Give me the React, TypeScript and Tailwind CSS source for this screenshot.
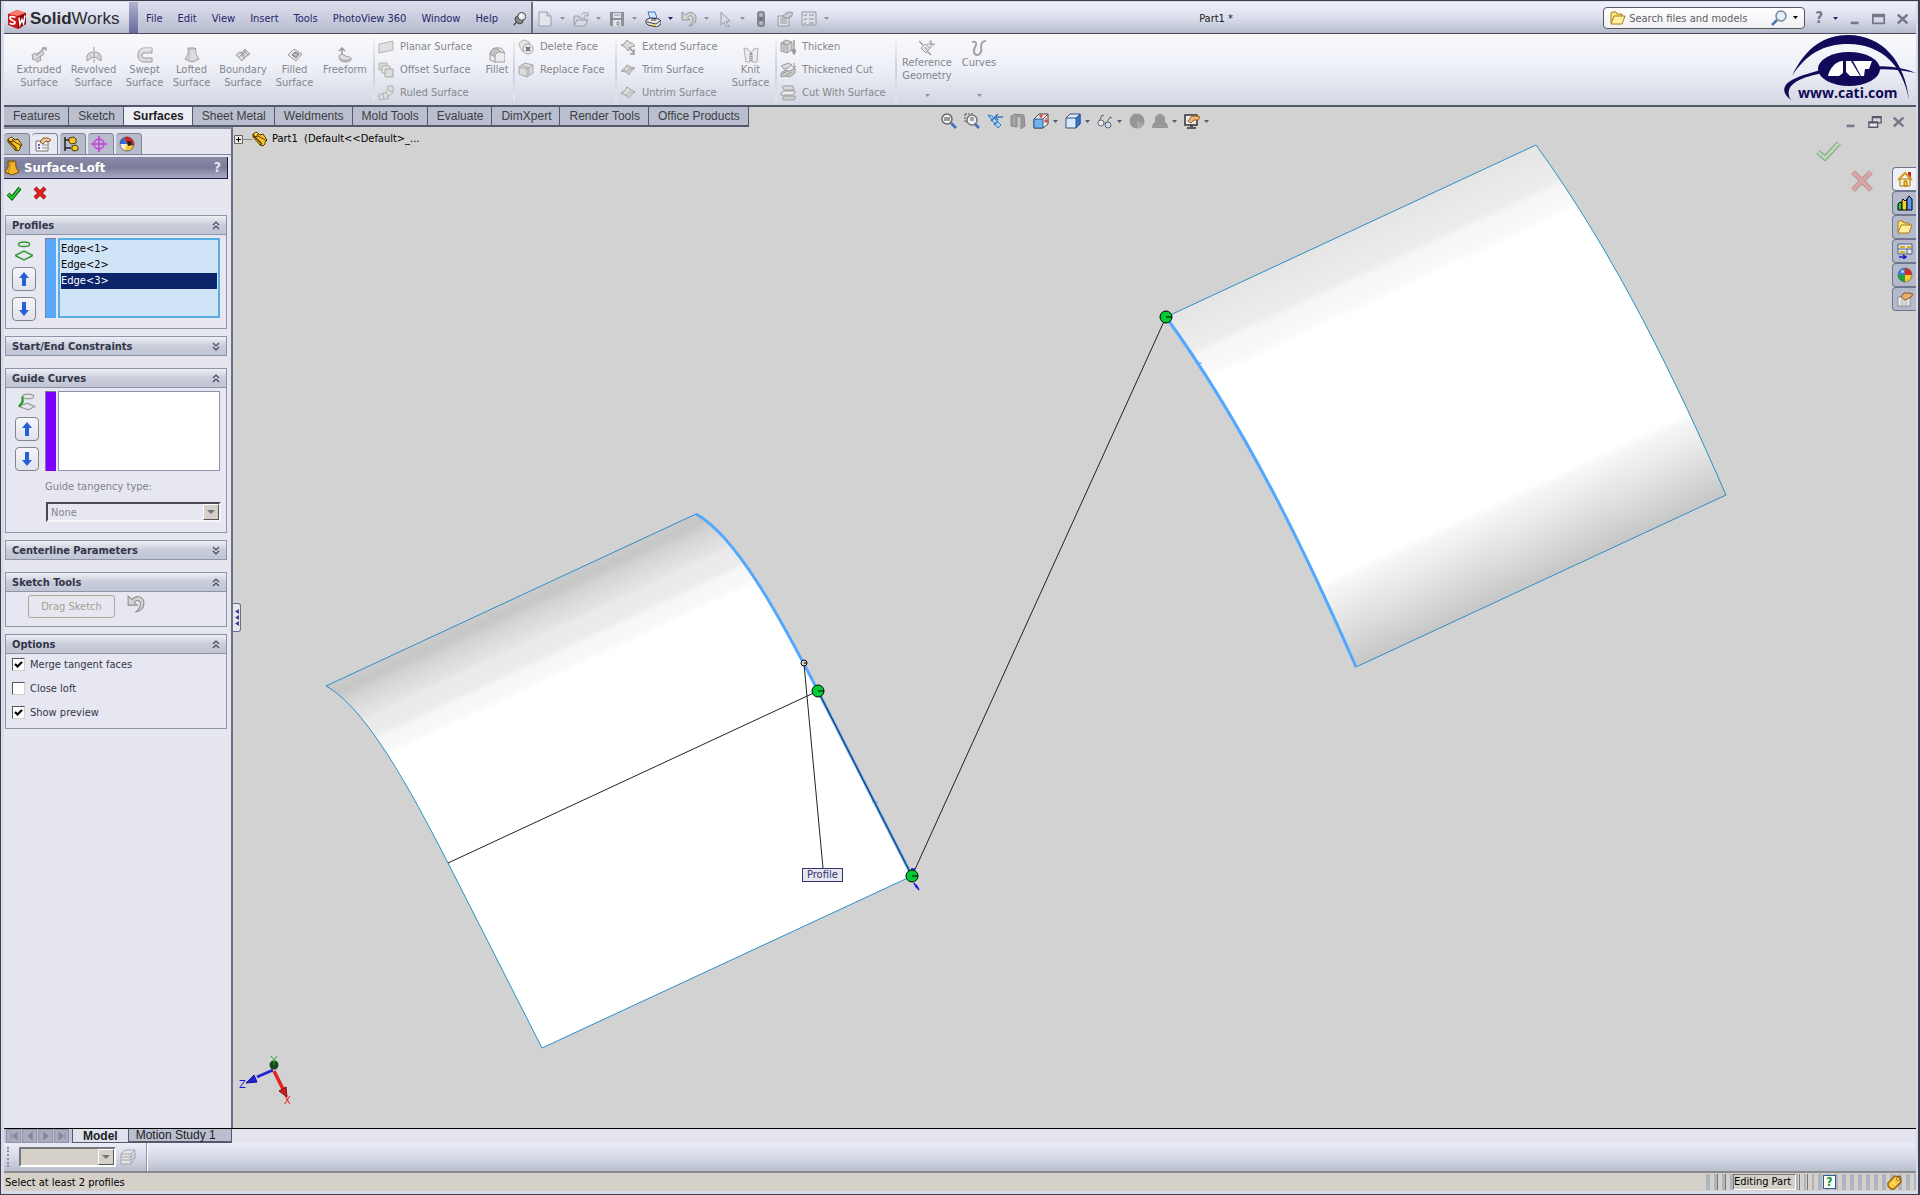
import { useState } from "react";
import type { ReactNode } from "react";
import { clsx } from "clsx";

const MENUS = ["File", "Edit", "View", "Insert", "Tools", "PhotoView 360", "Window", "Help"];

const COMMAND_TABS = [
  "Features",
  "Sketch",
  "Surfaces",
  "Sheet Metal",
  "Weldments",
  "Mold Tools",
  "Evaluate",
  "DimXpert",
  "Render Tools",
  "Office Products",
];

interface IconProps {
  children: ReactNode;
  className?: string;
}

/* 16px grid shared by every toolbar glyph */
function Icon({ children, className }: IconProps) {
  return (
    <svg viewBox="0 0 16 16" className={clsx("shrink-0", className ?? "size-4")} fill="none" aria-hidden="true">
      {children}
    </svg>
  );
}

function Caret({ className = "text-[#8f939c]" }: { className?: string }) {
  return (
    <svg viewBox="0 0 5 3" className={clsx("w-[5px] h-[3px] shrink-0", className)} aria-hidden="true">
      <path d="M0 0h5L2.5 3z" fill="currentColor" />
    </svg>
  );
}

/* ---------- toolbar glyphs ---------- */

const G = "#9b9b9b";
const L = "#dcdcdc";

function ExtrudedIcon() {
  return (
    <Icon>
      <path d="M1 8l3-2 2 1 5-4 2 4-4 3 1 3-4 2-2-3-2 1z" fill={L} stroke={G} />
      <path d="M5 9l5-4M6 12l5-4" stroke={G} />
      <path d="M10 4l4-3M11 1h4v3" stroke={G} strokeWidth="1.3" />
    </Icon>
  );
}

function RevolvedIcon() {
  return (
    <Icon>
      <path d="M1 14V9c1-3 4-4 7-4s6 1 7 4v5l-3-2c-2-2-6-2-8 0z" fill={L} stroke={G} />
      <path d="M4 7v5M12 7v5" stroke="#bdbdbd" />
      <path d="M8 0v16" stroke={G} strokeDasharray="4 2" />
    </Icon>
  );
}

function SweptIcon() {
  return (
    <Icon>
      <path d="M15 1H7a6 6 0 0 0-6 6v2a6 6 0 0 0 6 6h8v-4H7a2 2 0 0 1-2-2V8a2 2 0 0 1 2-2h8z" fill={L} stroke={G} />
      <path d="M3 4c1-1 2-2 4-2h8" stroke="#f4f4f4" />
    </Icon>
  );
}

function LoftedIcon({ fill = L, stroke = G }: { fill?: string; stroke?: string }) {
  return (
    <Icon>
      <path d="M4 1h7l1 1c-1 5 1 7 3 10l-2 1-5 2-5-2-2-1c2-3 4-5 3-9z" fill={fill} stroke={stroke} />
      <path d="M4 2h7M6 3c0 5-1 8-2 10" stroke={stroke} opacity=".5" />
    </Icon>
  );
}

function BoundaryIcon() {
  return (
    <Icon>
      <path d="M1 8l4-3 2 1 3-4 5 5-3 2-2 1-3 4z" fill={L} stroke={G} />
      <path d="M5 5l5 7M7 6l4 4M4 10l7-6M8 3l5 5" stroke={G} />
    </Icon>
  );
}

function FilledIcon() {
  return (
    <Icon>
      <path d="M1 8l6-6 8 5-6 7z" fill="#e9e9e9" stroke={G} />
      <path d="M5 8l3-3 4 2-3 4z" fill="#b5b5b5" stroke="#777" />
    </Icon>
  );
}

function FreeformIcon() {
  return (
    <Icon>
      <path d="M2 10c0-3 3-3 5-2 2 2 5 1 7 3 1 3-3 4-6 4s-6-2-6-5z" fill={L} stroke={G} />
      <path d="M3 12c3 2 8 2 11 0" stroke={G} />
      <path d="M5 8V2M2 4l3-3 3 3" stroke={G} strokeWidth="1.5" />
    </Icon>
  );
}

function PlanarIcon() {
  return (
    <Icon>
      <path d="M1 5l14-3v9L1 14z" fill="#e0e0e0" stroke="#b5b5b5" />
    </Icon>
  );
}

function OffsetIcon() {
  return (
    <Icon>
      <path d="M1 1h8v7H1z" fill={L} stroke="#b0b0b0" />
      <path d="M4 4h8v7H4z" fill="#e8e8e8" stroke="#b0b0b0" />
      <path d="M7 7h8v8H7z" fill={L} stroke="#a5a5a5" />
    </Icon>
  );
}

function RuledIcon() {
  return (
    <Icon>
      <path d="M10 1h5v5c0 3-3 4-5 5v3H6l-5 1v-5l5-2c3-1 4-3 4-7z" fill={L} stroke="#b0b0b0" />
      <path d="M10 5l5 2M8 8l3 4M5 9l1 5" stroke="#b0b0b0" />
    </Icon>
  );
}

function FilletIcon() {
  return (
    <Icon>
      <path d="M1 7c1-4 3-6 7-6h4l4 5v9H6L1 13z" fill="#ececec" stroke={G} />
      <path d="M1 7c1-4 3-6 7-6l4 4c-4 0-6 2-6 5z" fill="#c4c4c4" stroke={G} />
      <path d="M6 10v5M12 5l4 1" stroke={G} />
    </Icon>
  );
}

function DeleteFaceIcon() {
  return (
    <Icon>
      <path d="M1 6c0-3 3-5 6-5l4 2 2 4-4 6-5-1z" fill="#e4e4e4" stroke="#b8b8b8" />
      <circle cx="10" cy="10" r="5" fill="#f0f0f0" stroke={G} />
      <path d="M8 8l4 4M12 8l-4 4" stroke="#777" strokeWidth="2" />
    </Icon>
  );
}

function ReplaceFaceIcon() {
  return (
    <Icon>
      <path d="M1 5l6-4 8 2v8l-6 4-8-3z" fill={L} stroke="#a8a8a8" />
      <path d="M1 5l8 2 6-4M9 7v8M3 3l8 3v7" stroke="#a8a8a8" />
    </Icon>
  );
}

function ExtendIcon() {
  return (
    <Icon>
      <path d="M1 6l3-1 3-4 3 3 2 0 3 3-4 1-3 4-3-4z" fill={L} stroke={G} />
      <path d="M9 8l5 6M14 10v5h-4" stroke={G} strokeWidth="1.5" />
    </Icon>
  );
}

function TrimIcon() {
  return (
    <Icon>
      <path d="M1 9l4-3 2-3 3 2 5 1-4 3-2 4-3-3z" fill={L} stroke={G} />
      <path d="M3 8l4 2 4-5M8 4l5 4" stroke="#b8b8b8" strokeWidth="2" />
    </Icon>
  );
}

function UntrimIcon() {
  return (
    <Icon>
      <path d="M1 8l4-2 2-4 4 3 4 2-4 2-2 4-4-3z" fill="#e6e6e6" stroke={G} />
      <path d="M6 9l3 4 4-5-4-2z" fill="#cfcfcf" stroke="#b5b5b5" />
    </Icon>
  );
}

function KnitIcon() {
  return (
    <Icon>
      <path d="M1 1l4 1 3 4 3-4 4-1-1 14H9V8H7v7H3z" fill="#ececec" stroke="#b0b0b0" />
      <path d="M8 6v2M8 9v1M8 11v1M8 13v1" stroke={G} strokeWidth="3" />
    </Icon>
  );
}

function ThickenIcon() {
  return (
    <Icon>
      <path d="M1 4l5-3 6 2v8l-5 3-6-2z" fill="#d2d2d2" stroke={G} />
      <path d="M1 4l6 2 5-3M7 6v8M4 2v10" stroke={G} />
      <path d="M14 1v12M12 11l2 4 2-4z" stroke={G} strokeWidth="1.5" fill={G} />
    </Icon>
  );
}

function ThickenedCutIcon() {
  return (
    <Icon>
      <path d="M1 4l5-2 2-1 4 2-4 3-4 1z" fill={L} stroke={G} />
      <path d="M1 11l4-3 5 1 5-3v5l-5 4-5-1-4 1z" fill="#c8c8c8" stroke={G} />
      <path d="M2 12l5-3M6 14l6-4M14 1v5M12 4l2 2 2-2" stroke={G} />
    </Icon>
  );
}

function CutWithIcon() {
  return (
    <Icon>
      <path d="M2 2l2-1h9l1 4H4z" fill={L} stroke={G} />
      <path d="M1 8l3-2h11v2l-3 2H1z" fill="#ededed" stroke={G} />
      <path d="M3 12l2-1h10v3l-2 1H3z" fill="#cfcfcf" stroke={G} />
    </Icon>
  );
}

function RefGeometryIcon() {
  return (
    <Icon>
      <path d="M2 8l4-4 5 4-4 5z" fill="#e8e8e8" stroke={G} />
      <path d="M0 1l4 4M8 11l4 4M6 7l2 3" stroke={G} strokeWidth="1.3" />
      <path d="M12 0v8M8 4h8M10 1l5 5" stroke={G} />
    </Icon>
  );
}

function CurvesIcon() {
  return (
    <Icon>
      <path d="M1 2c5-1 5 2 3 5-2 4-1 8 2 8 4 0 5-5 4-8 0-3 1-6 5-6" stroke="#a3a3a3" strokeWidth="2" />
    </Icon>
  );
}

function FolderIcon({ className }: { className?: string }) {
  return (
    <Icon className={className}>
      <path d="M1 13V3l1-1h4l1 2h5v2" fill="#ffe680" stroke="#a87b12" />
      <path d="M1 14l3-8h11l-3 8z" fill="#fff0a0" stroke="#a87b12" />
    </Icon>
  );
}

function PartIcon({ className }: { className?: string }) {
  return (
    <Icon className={className}>
      <path d="M1 3l4-2 3 3 3-1 4 6-2 2v2l-2 2-3-1-7-8z" fill="#f7c52b" stroke="#5a3a00" />
      <path d="M1 4l8 8v3" stroke="#5a3a00" strokeWidth="1.5" />
      <path d="M5 1l1 4 9 5M6 5L2 6" stroke="#5a3a00" />
      <path d="M3 3l3-1" stroke="#fff1a0" />
    </Icon>
  );
}

function PropertyIcon() {
  return (
    <Icon>
      <path d="M1 5h12v10H1z" fill="#f5f5fa" stroke="#777" />
      <path d="M3 9h2M3 12h2" stroke="#5b6fb5" strokeWidth="2" />
      <path d="M7 9h5M7 12h5" stroke="#888" />
      <path d="M5 6l3-4h5l3 2-2 2-3-1-3 3z" fill="#f0c496" stroke="#8a5a2a" />
    </Icon>
  );
}

function UndoIcon({ className }: { className?: string }) {
  return (
    <Icon className={className}>
      <path d="M1 1v8h8L6.500 6.500C9 3.500 12 5 12 8c0 3-2 5-4 7 5-1 7-4 7-8 0-5-6-8-10.500-3z" fill="#d3d3d3" stroke="#939393" />
    </Icon>
  );
}

function SphereIcon() {
  return (
    <Icon>
      <path d="M8 8V1a7 7 0 0 1 7 7z" fill="#dd2a1b" />
      <path d="M8 8h7a7 7 0 0 1-7 7z" fill="#f7c92c" />
      <path d="M8 8v7a7 7 0 0 1-7-7z" fill="#1fa336" />
      <path d="M8 8H1a7 7 0 0 1 7-7z" fill="#3b7de0" />
      <circle cx="5.500" cy="4.500" r="1.500" fill="#b9d9ff" />
      <circle cx="8" cy="8" r="7" stroke="#44444a" strokeOpacity=".5" />
    </Icon>
  );
}

function DisplayIcon() {
  return (
    <Icon>
      <path d="M8 8L5 1.500A7 7 0 0 1 14.500 10z" fill="#d9201a" />
      <path d="M8 8l6.500 2A7 7 0 0 1 6 14.700z" fill="#f7c92c" />
      <path d="M8 8l-2 6.700A7 7 0 0 1 1 8z" fill="#f4f0d0" />
      <path d="M8 8H1a7 7 0 0 1 4-6.500z" fill="#2f6fd8" />
      <path d="M8 5l4 0 1 4-4 1z" fill="#222" />
      <circle cx="8" cy="8" r="7" stroke="#3a3a44" strokeOpacity=".6" />
    </Icon>
  );
}

function WindowGlyph({ kind }: { kind: "min" | "max" | "close" | "restore" }) {
  return (
    <Icon className="size-[14px]">
      {kind === "min" && <path d="M3 11h9v3H3z" fill="#75798a" />}
      {kind === "max" && <path d="M1 3h13v10H1zM1 5h13" stroke="#75798a" strokeWidth="2" />}
      {kind === "close" && <path d="M2 3l11 10M13 3L2 13" stroke="#75798a" strokeWidth="3" />}
      {kind === "restore" && (
        <>
          <path d="M5 2h10v7H5zM5 3h10" fill="#d5d6dc" stroke="#55586a" strokeWidth="1.500" />
          <path d="M1 8h10v6H1zM1 9h10" fill="#e8e8ee" stroke="#55586a" strokeWidth="1.500" />
        </>
      )}
    </Icon>
  );
}

/* ---------- title bar ---------- */

function ToolWithMenu({ children, active }: { children: ReactNode; active?: boolean }) {
  return (
    <button type="button" className="flex items-center gap-[7px]">
      {children}
      <Caret className={active ? "text-[#27256b]" : "text-[#8f939c]"} />
    </button>
  );
}

function TitleBar() {
  return (
    <header className="flex items-stretch h-8 bg-linear-to-b from-[#f0f0fc] via-[#dcdfee] to-[#b6bccb] border-b border-[#4a4c5c]">
      <div className="flex items-center gap-[3px] pl-[3px] pt-0.5 w-[125px]">
        <svg viewBox="0 0 20 20" className="size-5" aria-hidden="true">
          <path d="M1 5l9-4 9 3v11l-8 5-10-4z" fill="#c81414" />
          <path d="M1 5l9-4 9 3-8 3z" fill="#ff7a70" />
          <path d="M11 7l8-3v11l-8 5z" fill="#8f0b0b" />
          <path d="M8.500 8.500C5 7 2.500 7.500 3 9.500s5 2 5 4-3 2-5.500.500" fill="none" stroke="#fff" strokeWidth="1.800" />
          <path d="M12 8.500l1 7 2-5 1.500 4L18 6.500" fill="none" stroke="#fff" strokeWidth="1.500" />
        </svg>
        <span className="font-['Liberation_Sans'] text-[17px] leading-5 text-[#2b2b30]">
          <b>Solid</b>Works
        </span>
      </div>
      <div className="w-[9px] bg-linear-to-b from-[#b0b3cc] to-[#6a6a9c]" />
      <nav className="flex items-center gap-[15px] pl-2 pr-1 pt-0.5 bg-linear-to-b from-[#dddfee] to-[#b6bccd] border-r-2 border-[#6c6f82] text-[#27256b]">
        {MENUS.map((menu) => (
          <button key={menu} type="button">
            {menu}
          </button>
        ))}
        <Icon className="size-[14px]">
          <path d="M1 15l5-6" stroke="#333" strokeWidth="1.500" />
          <ellipse cx="7" cy="9" rx="5" ry="4" fill="#8b8d96" stroke="#333" transform="rotate(40 7 9)" />
          <circle cx="10" cy="5" r="4.500" fill="#e8e9ee" stroke="#333" />
          <circle cx="9" cy="4" r="1.500" fill="#fff" />
        </Icon>
      </nav>
      <div className="flex items-center gap-2 pl-1 pt-0.5">
        <ToolWithMenu>
          <Icon>
            <path d="M2 1h8l4 4v10H2z" fill="#e4e5ee" stroke="#9a9da8" />
            <path d="M10 1v4h4" stroke="#9a9da8" />
          </Icon>
        </ToolWithMenu>
        <ToolWithMenu>
          <Icon>
            <path d="M1 14V5h5l1 2h5v2" fill="#d4d6de" stroke="#9a9da8" />
            <path d="M1 15l3-6h11l-3 6zM8 4c2-3 4-3 6-1M15 1v4h-4" fill="#d9dbe4" stroke="#9a9da8" />
          </Icon>
        </ToolWithMenu>
        <ToolWithMenu>
          <Icon>
            <path d="M1 1h14v14H1z" fill="#8d9099" />
            <path d="M4 2h8v5H4zM4 9h8v6H4z" fill="#e2e3ea" />
            <path d="M5 4h6M8 11h2v3H8z" stroke="#8d9099" />
          </Icon>
        </ToolWithMenu>
        <ToolWithMenu active>
          <Icon>
            <path d="M3 1h7l2 6H5z" fill="#cfe6ff" stroke="#4278b8" />
            <path d="M1 9l4-2 9 1 2 2v3l-4 3-9-2-2-2z" fill="#e6e6e6" stroke="#3b3b3b" />
            <path d="M2 11l9 2 4-3M6 9h5" stroke="#444" />
            <path d="M8 14h3" stroke="#e0c93c" strokeWidth="2" />
          </Icon>
        </ToolWithMenu>
        <ToolWithMenu>
          <UndoIcon />
        </ToolWithMenu>
        <ToolWithMenu>
          <Icon>
            <path d="M4 1l9 9-4 .500 3 5-2.500.500L7 11l-3 3z" fill="#dadce5" stroke="#989ba6" />
          </Icon>
        </ToolWithMenu>
        <Icon>
          <rect x="4" y="0" width="8" height="16" rx="3" fill="#84868f" />
          <circle cx="8" cy="4" r="2" fill="#b8bac2" />
          <circle cx="8" cy="8" r="2" fill="#6b6d75" />
          <circle cx="8" cy="12" r="2" fill="#b8bac2" />
        </Icon>
        <Icon>
          <path d="M1 5h11v10H1z" fill="#e0e1e8" stroke="#94979f" />
          <path d="M3 8h7M3 10h7M3 12h7M5 6l4-4 4-1 3 1-2 4-4 1z" fill="#c9cbd2" stroke="#94979f" />
        </Icon>
        <ToolWithMenu>
          <Icon>
            <path d="M1 1h14v13H1z" fill="#e0e1e8" stroke="#94979f" />
            <path d="M3 4l1 1 2-2M3 8l1 1 2-2M3 12h2M8 4h5M8 8h5M8 12h5" stroke="#8b8e98" />
          </Icon>
        </ToolWithMenu>
      </div>
      <h1 className="flex-1 self-center pt-0.5 text-center text-[#222]">Part1 *</h1>
      <form className="flex items-center self-center gap-[3px] w-[202px] h-[22px] px-1.5 rounded-sm border border-[#55565e] bg-linear-to-b from-white to-[#f0f0f4]">
        <FolderIcon />
        <input
          type="text"
          aria-label="Search files and models"
          placeholder="Search files and models"
          className="flex-1 min-w-0 pt-0.5 bg-transparent outline-none placeholder:text-[#5d5d63] placeholder:opacity-100"
        />
        <Icon>
          <circle cx="10" cy="6" r="5" fill="#dff0fc" stroke="#7c8796" strokeWidth="1.500" />
          <path d="M6 10l-5 5" stroke="#4976b5" strokeWidth="2.500" />
        </Icon>
        <span className="pl-[3px]">
          <Caret className="text-black" />
        </span>
      </form>
      <div className="flex items-center gap-2.5 pl-2.5 pr-[6px] pt-0.5">
        <button type="button" className="text-[15px] font-bold text-[#75798a]">?</button>
        <Caret className="text-[#27256b]" />
        <WindowGlyph kind="min" />
        <WindowGlyph kind="max" />
        <WindowGlyph kind="close" />
      </div>
    </header>
  );
}

/* ---------- ribbon ---------- */

interface BigCommandProps {
  icon: ReactNode;
  lines: string[];
  className: string;
}

function BigCommand({ icon, lines, className }: BigCommandProps) {
  return (
    <button type="button" className={clsx("flex flex-col items-center whitespace-nowrap", className)}>
      {icon}
      {lines.map((line) => (
        <span key={line}>{line}</span>
      ))}
    </button>
  );
}

function SmallCommand({ icon, label }: { icon: ReactNode; label: string }) {
  return (
    <button type="button" className="flex items-center gap-1.5 h-[23px] whitespace-nowrap">
      {icon}
      {label}
    </button>
  );
}

function Divider() {
  return <div className="w-0.5 self-stretch my-1 bg-linear-to-b from-[#f2f2f6] via-[#cdd0da] to-[#e6e8ef]" />;
}

function CompanyLogo() {
  return (
    <svg viewBox="0 0 132 68" className="w-[132px] h-[68px]" role="img" aria-label="www.cati.com">
      <path d="M8 42C22 12 42 1 64 1c34 0 57 26 61 65-6-34-27-56-61-56C40 10 22 20 8 42z" fill="#100a59" />
      <path d="M7 66C-4 58 0 50 8 46c9-5 22-8 36-12l1 4C26 41 8 46 5 56c-1 4 0 7 2 10z" fill="#100a59" />
      <path d="M86 33c16-2 32 0 46 6-15-3-30-5-46-3z" fill="#100a59" />
      <ellipse cx="65" cy="35" rx="31" ry="17" fill="#100a59" />
      <path d="M44 42c2-8 7-14 14-15h1v12l-4 3zM62 27h5l9 15H66l-4-4zM69 27h19l-3 8h-4l-1 7h-3z" fill="#fff" />
      <text x="14" y="64" className="font-['Open_Sans'] text-[14px] font-bold" fill="#100a59">
        www.cati.com
      </text>
    </svg>
  );
}

function Ribbon() {
  return (
    <section className="flex h-[73px] pl-[13px] text-[#85868c] bg-linear-to-b from-[#fafafc] via-[#edeff7] to-[#d3d7e2] border-b-2 border-[#55586b]">
      <div className="flex gap-2.5 pt-[13px] pr-1.5">
        <BigCommand className="w-11" icon={<ExtrudedIcon />} lines={["Extruded", "Surface"]} />
        <BigCommand className="w-[45px]" icon={<RevolvedIcon />} lines={["Revolved", "Surface"]} />
        <BigCommand className="w-[37px]" icon={<SweptIcon />} lines={["Swept", "Surface"]} />
        <BigCommand className="w-[37px]" icon={<LoftedIcon />} lines={["Lofted", "Surface"]} />
        <BigCommand className="w-[46px]" icon={<BoundaryIcon />} lines={["Boundary", "Surface"]} />
        <BigCommand className="w-[37px]" icon={<FilledIcon />} lines={["Filled", "Surface"]} />
        <BigCommand className="w-11" icon={<FreeformIcon />} lines={["Freeform"]} />
      </div>
      <Divider />
      <div className="flex w-[138px] pl-[3px] pr-1 pt-px justify-between">
        <div>
          <SmallCommand icon={<PlanarIcon />} label="Planar Surface" />
          <SmallCommand icon={<OffsetIcon />} label="Offset Surface" />
          <SmallCommand icon={<RuledIcon />} label="Ruled Surface" />
        </div>
        <div className="pt-3">
          <BigCommand className="w-6" icon={<FilletIcon />} lines={["Fillet"]} />
        </div>
      </div>
      <Divider />
      <div className="w-[100px] pl-[3px] pt-px">
        <SmallCommand icon={<DeleteFaceIcon />} label="Delete Face" />
        <SmallCommand icon={<ReplaceFaceIcon />} label="Replace Face" />
      </div>
      <Divider />
      <div className="flex w-[158px] pl-[3px] pr-1.5 pt-px justify-between">
        <div>
          <SmallCommand icon={<ExtendIcon />} label="Extend Surface" />
          <SmallCommand icon={<TrimIcon />} label="Trim Surface" />
          <SmallCommand icon={<UntrimIcon />} label="Untrim Surface" />
        </div>
        <div className="pt-3">
          <BigCommand className="w-[37px]" icon={<KnitIcon />} lines={["Knit", "Surface"]} />
        </div>
      </div>
      <Divider />
      <div className="w-[118px] pl-[3px] pt-px">
        <SmallCommand icon={<ThickenIcon />} label="Thicken" />
        <SmallCommand icon={<ThickenedCutIcon />} label="Thickened Cut" />
        <SmallCommand icon={<CutWithIcon />} label="Cut With Surface" />
      </div>
      <Divider />
      <div className="flex gap-2.5 pl-[5px] pt-1.5">
        <div className="flex flex-col items-center justify-between pb-2">
          <BigCommand className="w-[50px]" icon={<RefGeometryIcon />} lines={["Reference", "Geometry"]} />
          <Caret />
        </div>
        <div className="flex flex-col items-center justify-between pb-2">
          <BigCommand className="w-[34px]" icon={<CurvesIcon />} lines={["Curves"]} />
          <Caret />
        </div>
      </div>
      <a href="#cati" className="ml-auto self-start">
        <CompanyLogo />
      </a>
    </section>
  );
}

const HUD_CARET = "text-[#555b75]";

function HeadsUpToolbar() {
  return (
    <div className="absolute left-[229px] right-0 top-1.5 flex justify-center items-center gap-[7px]">
      <Icon>
        <circle cx="6" cy="6" r="5" fill="#f2f2f2" stroke="#666" strokeWidth="1.500" />
        <path d="M3 5h6M3 7h6" stroke="#444" />
        <path d="M10 10l5 5" stroke="#3c6fb4" strokeWidth="2.500" />
      </Icon>
      <Icon>
        <path d="M1 1h8v8H1z" stroke="#555" strokeDasharray="2 1" />
        <circle cx="8" cy="7" r="5" fill="#f2f2f2" stroke="#777" strokeWidth="1.500" />
        <path d="M7 4v4M9 4v4" stroke="#555" />
        <path d="M11 11l4 4" stroke="#3c6fb4" strokeWidth="2.500" />
      </Icon>
      <Icon>
        <path d="M1 2l4 1 9 9-3 3z" fill="#aed6f7" stroke="#3277bb" />
        <path d="M4 8l4-4M7 12l4-4" stroke="#3277bb" strokeWidth="1.500" />
        <path d="M16 4H9M11 1L8 4l3 3" stroke="#3c78bd" strokeWidth="1.500" />
      </Icon>
      <Icon>
        <path d="M1 3l4-2 9 1 1 11-4 3V4L7 3v11l-6-1z" fill="#9a9a9a" stroke="#8a8a8a" />
        <path d="M4 2v11M9 4v11" stroke="#b5b5b5" />
      </Icon>
      <div className="flex items-center gap-1">
        <Icon>
          <path d="M1 6l5-5h9v10l-5 4H1z" fill="#eee" stroke="#444" />
          <path d="M1 6h9v9H1z" fill="#72b3ec" stroke="#2c5e96" />
          <path d="M10 6l5-5M8 1v4M6 3h4M13 5v5M11 8h4" stroke="#c22" />
        </Icon>
        <Caret className={HUD_CARET} />
      </div>
      <div className="flex items-center gap-1">
        <Icon>
          <path d="M1 5l4-4h10v10l-4 4H1z" fill="#d6eafc" stroke="#3a4f80" />
          <path d="M11 5l4-4v10l-4 4z" fill="#3478c8" stroke="#2c4f90" />
          <path d="M1 5h10" stroke="#3a4f80" />
        </Icon>
        <Caret className={HUD_CARET} />
      </div>
      <div className="flex items-center gap-1">
        <Icon>
          <path d="M2 9L5 2l2 1M10 9l3-5 2 1M7 10h2" stroke="#666" />
          <circle cx="4" cy="10" r="3" fill="#e4eefa" stroke="#666" />
          <circle cx="11" cy="12" r="3" fill="#c4dcf5" stroke="#666" />
        </Icon>
        <Caret className={HUD_CARET} />
      </div>
      <Icon>
        <circle cx="8" cy="8" r="7.500" fill="#959595" />
        <path d="M8 8l7 3A8 8 0 0 1 8 15z" fill="#a8a8a8" />
      </Icon>
      <div className="flex items-center gap-1">
        <Icon>
          <path d="M0 15c0-3 1-5 3-6V6a5 5 0 0 1 10 0v3c2 1 3 3 3 6z" fill="#969696" />
          <path d="M3 13h10" stroke="#adadad" strokeDasharray="2 2" />
        </Icon>
        <Caret className={HUD_CARET} />
      </div>
      <div className="flex items-center gap-1">
        <Icon>
          <path d="M1 2h12v10H1z" fill="#e9eaf0" stroke="#333" strokeWidth="1.500" />
          <path d="M3 15h9M6 13h3" stroke="#333" strokeWidth="1.500" />
          <path d="M4 8l4-5h5l3 1-2 3-4 0-3 3z" fill="#efb678" stroke="#96591c" />
        </Icon>
        <Caret className={HUD_CARET} />
      </div>
    </div>
  );
}

function CommandTabs({ active, onSelect }: { active: string; onSelect: (tab: string) => void }) {
  return (
    <div className="relative z-10 flex h-5 bg-[#d2d2d2]">
      <div role="tablist" className="flex bg-[#55586b] font-['Liberation_Sans'] text-[12px] leading-4">
        {COMMAND_TABS.map((tab) => (
          <button
            key={tab}
            type="button"
            role="tab"
            aria-selected={tab === active}
            onClick={() => onSelect(tab)}
            className={clsx(
              "pl-[9px] pr-2 border-r border-b-2 border-[#55586b] whitespace-nowrap",
              tab === active ? "bg-[#eceef5] font-bold text-[#1d1d24]" : "bg-[#b9bfce] text-[#3c3d44]"
            )}
          >
            {tab}
          </button>
        ))}
      </div>
      <HeadsUpToolbar />
      <div className="relative ml-auto flex items-center gap-2.5 pt-[9px] pr-[10px]">
        <WindowGlyph kind="min" />
        <WindowGlyph kind="restore" />
        <WindowGlyph kind="close" />
      </div>
    </div>
  );
}

/* ---------- property manager ---------- */

function Chevrons({ open }: { open: boolean }) {
  return (
    <svg viewBox="0 0 8 9" className={clsx("w-2 h-[9px]", !open && "rotate-180")} aria-hidden="true">
      <path d="M1 4l3-3 3 3M1 8l3-3 3 3" fill="none" stroke="#44475a" strokeWidth="1.200" />
    </svg>
  );
}

interface GroupProps {
  title: string;
  children?: ReactNode;
  className?: string;
}

function Group({ title, children, className }: GroupProps) {
  const [open, setOpen] = useState(children !== undefined);
  return (
    <section className="border border-[#8f93a6] bg-[#e7e7f1]">
      <button
        type="button"
        onClick={() => setOpen(!open)}
        className={clsx(
          "flex w-full items-center justify-between pl-[6px] pr-1.5 bg-linear-to-b from-[#eff0f6] via-[#c9cdda] to-[#c0c5d5] font-bold text-[#33364a]",
          open ? "h-[19px] border-b border-[#8f93a6]" : "h-[18px]"
        )}
      >
        {title}
        <Chevrons open={open} />
      </button>
      {open && children && <div className={className}>{children}</div>}
    </section>
  );
}

function ArrowButton({ direction }: { direction: "up" | "down" }) {
  return (
    <button
      type="button"
      aria-label={direction === "up" ? "Move up" : "Move down"}
      className="flex size-6 items-center justify-center rounded-[4px] border border-[#82848e] bg-linear-to-b from-[#f6f6fa] to-[#e0e1ea]"
    >
      <Icon className={clsx("size-4", direction === "down" && "rotate-180")}>
        <path d="M8 1l5 6h-3v8H6V7H3z" fill="#2560d8" />
      </Icon>
    </button>
  );
}

function CheckOption({ label, checked }: { label: string; checked: boolean }) {
  const [on, setOn] = useState(checked);
  return (
    <label className="flex items-center gap-[5px] h-6 pb-[3px]">
      <span className="grid size-[13px]">
        <input
          type="checkbox"
          checked={on}
          onChange={() => setOn(!on)}
          className="col-start-1 row-start-1 appearance-none size-[13px] bg-white border border-t-[#55555a] border-l-[#55555a] border-r-[#d6d2ca] border-b-[#d6d2ca]"
        />
        {on && (
          <svg viewBox="0 0 13 13" className="col-start-1 row-start-1 pointer-events-none" aria-hidden="true">
            <path d="M3 6l2.500 2.500L10 4" fill="none" stroke="#000" strokeWidth="2.200" />
          </svg>
        )}
      </span>
      {label}
    </label>
  );
}

const PANEL_TABS: { name: string; icon: ReactNode }[] = [
  { name: "Feature tree", icon: <PartIcon /> },
  { name: "Property manager", icon: <PropertyIcon /> },
  {
    name: "Configurations",
    icon: (
      <Icon>
        <path d="M2 1v14M2 4h4M2 12h6" stroke="#222" strokeWidth="1.500" />
        <path d="M6 2l5-1 2 2v4l-5 1-2-2zM9 10l4-1 2 2v3l-4 1-2-1z" fill="#f5c92e" stroke="#4a3500" />
      </Icon>
    ),
  },
  {
    name: "DimXpert",
    icon: (
      <Icon>
        <circle cx="8" cy="8" r="5" stroke="#c93fd6" strokeWidth="1.500" />
        <path d="M8 0v16M0 8h16" stroke="#c93fd6" strokeWidth="1.500" />
      </Icon>
    ),
  },
  { name: "Display", icon: <DisplayIcon /> },
];

function PropertyManager() {
  const [selected, setSelected] = useState("Edge<3>");
  return (
    <aside className="w-[229px] shrink-0 border-t-2 border-t-[#8f93a6] border-r-2 border-r-[#6b6f85] bg-[#e6e6ef] text-[#33364a]">
      <div className="flex items-end gap-0.5 h-[26px] border-b border-[#8186a0]">
        {PANEL_TABS.map((tab, index) => (
          <button
            key={tab.name}
            type="button"
            aria-label={tab.name}
            className={clsx(
              "flex w-[26px] h-[21px] items-center pl-[3px] rounded-t-[4px] border border-l-0 border-b-0 border-[#7e839a]",
              index === 1 ? "bg-[#e9e9f2]" : "bg-[#b7bccd]"
            )}
          >
            {tab.icon}
          </button>
        ))}
      </div>
      <h2 className="flex items-center gap-1 h-[22px] mt-0.5 mr-[3px] pr-1.5 bg-linear-to-b from-[#8a8ba6] via-[#7c7d9b] to-[#a9aac2] border-b border-r border-[#1b1b4a] text-[13px] font-bold text-white">
        <LoftedIcon fill="#f3b52a" stroke="#6e4a08" />
        <span className="flex-1">Surface-Loft</span>
        <span className="text-[14px] text-[#e4e4ec]">?</span>
      </h2>
      <div className="flex gap-2.5 pl-[2px] pt-1.5">
        <button type="button" aria-label="OK">
          <Icon>
            <path d="M2 9l4 4 8-10" stroke="#145c14" strokeWidth="4" />
            <path d="M2 9l4 4 8-10" stroke="#27cf2b" strokeWidth="2" />
          </Icon>
        </button>
        <button type="button" aria-label="Cancel">
          <Icon>
            <path d="M3 3l10 10M13 3L3 13" stroke="#8a1010" strokeWidth="4" />
            <path d="M3 3l10 10M13 3L3 13" stroke="#ea2222" strokeWidth="2.500" />
          </Icon>
        </button>
      </div>

      <div className="flex flex-col gap-[7px] pt-3.5 pl-px pr-1">
        <Group title="Profiles" className="flex h-[93px] pt-[3px] pl-1.5">
          <div className="flex flex-col items-center gap-1.5 w-6 pt-[3px]">
            <Icon className="w-[18px] h-5">
              <ellipse cx="8" cy="2" rx="5" ry="2" stroke="#2d9a2d" strokeWidth="1.300" />
              <path d="M0 12l8-4 8 4-8 4z" stroke="#2d9a2d" strokeWidth="1.300" />
            </Icon>
            <ArrowButton direction="up" />
            <ArrowButton direction="down" />
          </div>
          <div className="w-[11px] h-20 ml-[9px] bg-[#58a8fb] border-t border-l border-[#7d8092]" />
          <ul role="listbox" aria-label="Profiles" className="w-[162px] h-20 ml-0.5 p-px border-2 border-[#5aade3] bg-[#d0e4f7] leading-4 text-black">
            {["Edge<1>", "Edge<2>", "Edge<3>"].map((edge) => (
              <li
                key={edge}
                role="option"
                aria-selected={edge === selected}
                onClick={() => setSelected(edge)}
                className={clsx(edge === selected && "bg-[#0b246a] text-white")}
              >
                {edge}
              </li>
            ))}
          </ul>
        </Group>
        <Group title="Start/End Constraints" />
      </div>

      <div className="flex flex-col gap-[7px] pt-3 pl-px pr-1">
        <Group title="Guide Curves" className="h-[144px] pt-[3px] pl-1.5">
          <div className="flex">
            <div className="flex flex-col items-center gap-1.5 w-[30px] pt-0.5">
              <Icon className="size-[18px]">
                <ellipse cx="9" cy="3" rx="5" ry="2" stroke="#9a9a9a" />
                <path d="M1 12l7-3 7 3-6 3z" stroke="#9a9a9a" />
                <path d="M4 3v5l-3 4" stroke="#1f9e1f" strokeWidth="2" />
              </Icon>
              <ArrowButton direction="up" />
              <ArrowButton direction="down" />
            </div>
            <div className="w-[11px] h-20 ml-[3px] bg-[#7b00ff] border-t border-l border-[#7d8092]" />
            <div role="listbox" aria-label="Guide curves" className="w-[162px] h-20 ml-0.5 border border-[#8c93ab] bg-white" />
          </div>
          <label htmlFor="tangency" className="block mt-2 ml-[33px] leading-4 text-[#83848c]">
            Guide tangency type:
          </label>
          <div className="relative mt-[7px] ml-[34px] w-[175px]">
            <select
              id="tangency"
              disabled
              className="appearance-none block w-full h-5 px-[3px] border-2 border-t-[#4a4a4e] border-l-[#4a4a4e] border-r-[#f5f5f8] border-b-[#f5f5f8] bg-transparent text-[#83848c] opacity-100"
            >
              <option>None</option>
            </select>
            <ComboArrow />
          </div>
        </Group>
        <Group title="Centerline Parameters" />
      </div>

      <div className="flex flex-col gap-[7px] pt-3 pl-px pr-1">
        <Group title="Sketch Tools" className="flex items-start h-[34px] gap-3 pt-[3px] pl-[22px]">
          <button type="button" disabled className="w-[87px] h-[23px] rounded-[3px] border border-[#a9ab97] text-[#a0a193]">
            Drag Sketch
          </button>
          <UndoIcon className="size-[18px]" />
        </Group>
        <Group title="Options" className="h-[74px] pl-1.5">
          <CheckOption label="Merge tangent faces" checked />
          <CheckOption label="Close loft" checked={false} />
          <CheckOption label="Show preview" checked />
        </Group>
      </div>
    </aside>
  );
}

function ComboArrow() {
  return (
    <span className="pointer-events-none absolute right-0.5 top-0.5 bottom-0.5 flex w-4 items-center justify-center border border-t-white border-l-white border-r-[#55555a] border-b-[#55555a] bg-[#d5d0c8]">
      <svg viewBox="0 0 8 4" className="w-2 h-1" aria-hidden="true">
        <path d="M0 0h8L4 4z" fill="#77777a" />
      </svg>
    </span>
  );
}

/* ---------- graphics area ---------- */

function Vertex({ x, y }: { x: number; y: number }) {
  return (
    <g>
      <circle cx={x} cy={y} r="6" fill="#00cc33" stroke="#000" />
      <path d={`M${x} ${y}h6`} stroke="#000" />
    </g>
  );
}

const LEFT_FACE = "M326 686C366 708 410 789 448 863L542 1048L912 876L818 691C780 617 736 536 696 514Z";
const LEFT_PROFILE = "M696 514C736 536 780 617 818 691L912 876";
const RIGHT_FACE = "M1166 317C1246 427 1308 557 1356 667L1726 495C1678 385 1616 255 1536 145Z";
const RIGHT_PROFILE = "M1166 317C1246 427 1308 557 1356 667";

function Scene() {
  return (
    <svg className="absolute inset-0 w-full h-full" aria-label="Loft preview">
      <defs>
        {/* both gradients run across the extrusion direction */}
        <linearGradient id="leftShade" gradientUnits="userSpaceOnUse" x1="326" y1="686" x2="364" y2="767">
          <stop offset="0" stopColor="#cbcbcb" />
          <stop offset=".12" stopColor="#c6c6c6" />
          <stop offset=".24" stopColor="#d4d4d4" />
          <stop offset=".4" stopColor="#dfdfdf" />
          <stop offset=".48" stopColor="#e4e4e4" />
          <stop offset=".52" stopColor="#eaeaea" />
          <stop offset=".72" stopColor="#ececec" />
          <stop offset=".78" stopColor="#f6f6f8" />
          <stop offset=".95" stopColor="#f9f9fa" />
          <stop offset="1" stopColor="#fff" />
        </linearGradient>
        <linearGradient id="rightShade" gradientUnits="userSpaceOnUse" x1="1166" y1="317" x2="1334" y2="678">
          <stop offset="0" stopColor="#e5e5e5" />
          <stop offset=".07" stopColor="#ebebeb" />
          <stop offset=".1" stopColor="#ececec" />
          <stop offset=".12" stopColor="#f6f6f8" />
          <stop offset=".17" stopColor="#f9f9fa" />
          <stop offset=".19" stopColor="#fff" />
          <stop offset=".77" stopColor="#fff" />
          <stop offset=".79" stopColor="#f6f6f8" />
          <stop offset=".84" stopColor="#ececec" />
          <stop offset=".91" stopColor="#dcdcdc" />
          <stop offset="1" stopColor="#c6c6c6" />
        </linearGradient>
      </defs>
      <g transform="translate(-233 -127)" fill="none">
        <path d={LEFT_FACE} fill="url(#leftShade)" stroke="#2a8fc9" />
        <path d={RIGHT_FACE} fill="url(#rightShade)" stroke="#2a8fc9" />
        <path d={LEFT_PROFILE} stroke="#52a8ff" strokeWidth="3" />
        <path d={RIGHT_PROFILE} stroke="#52a8ff" strokeWidth="3" />
        <path d="M872 802h6M1196 363h6" stroke="#52a8ff" />
        <path d="M448 863L818 691L912 876L1166 317M804 664L823 868" stroke="#222" />
        <path d="M911 869h4M914 883l3 5-1-3 3 5" stroke="#1414e0" strokeWidth="1.500" />
        <circle cx="804" cy="663" r="3" fill="#d2d2d2" stroke="#000" />
        <path d="M804 663h3" stroke="#000" />
        <Vertex x={818} y={691} />
        <Vertex x={912} y={876} />
        <Vertex x={1166} y={317} />

        {/* orientation triad */}
        <path d="M273 1070l-16 7" stroke="#2222d8" strokeWidth="3" />
        <path d="M246 1083l8-8 3 7z" fill="#2222d8" stroke="#14148c" />
        <path d="M274 1071l9 18" stroke="#e02424" strokeWidth="3.500" />
        <path d="M287 1097l-8-6 7-4z" fill="#c81f1f" stroke="#7a1010" />
        <circle cx="274" cy="1065" r="4.500" fill="#134a17" />
        <path d="M271 1056l3 4 3-4M274 1060v5" stroke="#1fae2b" />
        <text x="239" y="1088" fill="#1a1ae0">Z</text>
        <text x="284" y="1104" fill="#e81c1c">X</text>
      </g>
    </svg>
  );
}

const TASK_TABS: { name: string; icon: ReactNode }[] = [
  {
    name: "Resources",
    icon: (
      <Icon>
        <path d="M3 8h10v7H3z" fill="#fff6c4" stroke="#a8700e" />
        <path d="M11 1h3v6h-3z" fill="#c22f1d" />
        <path d="M1 9l7-7 7 7" stroke="#d8991f" strokeWidth="2" />
        <path d="M7 10h3v5H7z" fill="#f5c92e" stroke="#a8700e" />
      </Icon>
    ),
  },
  {
    name: "Design Library",
    icon: (
      <Icon>
        <path d="M1 9l2-2 2 1v7H1z" fill="#2bc23a" stroke="#000" />
        <path d="M5 6l1-2 2 2 2-2v11H5z" fill="#f5d32e" stroke="#000" />
        <path d="M10 4l2-3 2 2 1 1v11h-5z" fill="#5a9df0" stroke="#000" />
      </Icon>
    ),
  },
  { name: "File Explorer", icon: <FolderIcon /> },
  {
    name: "View Palette",
    icon: (
      <Icon>
        <path d="M1 1h14v10H1z" fill="#dce3f2" stroke="#56617f" />
        <path d="M3 4h5M3 9h5M10 4h4" stroke="#d8b414" strokeWidth="2" />
        <path d="M10 6v5M1 6h14" stroke="#56617f" />
        <path d="M2 14h6M6 12l3 2-3 2" stroke="#1a1acc" strokeWidth="1.500" />
      </Icon>
    ),
  },
  { name: "Appearances", icon: <SphereIcon /> },
  {
    name: "Custom Properties",
    icon: (
      <Icon>
        <path d="M1 6h12v9H1z" fill="#f4f4f4" stroke="#8a8a8a" />
        <path d="M3 9h8M3 11h8M3 13h8" stroke="#aaa" />
        <path d="M4 6l3-4h5l4 1-2 3-4 2-2 1z" fill="#e8b070" stroke="#8c5218" />
      </Icon>
    ),
  },
];

function GraphicsArea() {
  return (
    <main className="relative flex-1 overflow-hidden bg-[#d2d2d2]">
      <Scene />
      <div className="relative flex items-center pl-[1px] pt-1 text-black">
        <svg viewBox="0 0 9 9" className="size-[9px]" aria-hidden="true">
          <path d="M.5.5h8v8h-8z" fill="#e8e8e8" stroke="#666" />
          <path d="M2 4.500h5M4.500 2v5" stroke="#000" />
        </svg>
        <span className="w-[9px] h-px bg-[#888]" />
        <PartIcon />
        <span className="pl-1 leading-4 whitespace-pre">{"Part1  (Default<<Default>_..."}</span>
      </div>
      <span className="absolute left-[569px] top-[741px] px-1 border border-[#33336e] bg-[#e6e6f0] text-[#33336e] leading-3">
        Profile
      </span>
      <svg viewBox="0 0 64 52" className="absolute right-[42px] top-[13px] w-16 h-[52px]" fill="none" aria-hidden="true">
        <path d="M8 12l7 6L29 3" stroke="#8d9d8d" strokeWidth="5" />
        <path d="M8 12l7 6L29 3" stroke="#b7dbb4" strokeWidth="3" />
        <path d="M43 32l18 18M61 32L43 50" stroke="#a98f8f" strokeWidth="5" />
        <path d="M43 32l18 18M61 32L43 50" stroke="#dba5a5" strokeWidth="3.500" />
      </svg>
      <div className="absolute right-0 top-10 flex flex-col">
        {TASK_TABS.map((tab, index) => (
          <button
            key={tab.name}
            type="button"
            aria-label={tab.name}
            className={clsx(
              "flex w-6 h-6 items-center justify-center rounded-l-[4px] border border-r-0 border-[#6f7690]",
              index === 0 ? "bg-[#eef0f6]" : "bg-[#b4bacb]"
            )}
          >
            {tab.icon}
          </button>
        ))}
      </div>
      <div className="absolute left-0 top-[476px] flex flex-col justify-around w-2 h-[29px] pl-[2px] py-1 rounded-r-[3px] border border-l-0 border-[#6b6f85] bg-[#e6e6ef]">
        {[0, 1, 2].map((n) => (
          <svg key={n} viewBox="0 0 4 5" className="w-1 h-[5px]" aria-hidden="true">
            <path d="M4 0v5L0 2.500z" fill="#3e4290" />
          </svg>
        ))}
      </div>
    </main>
  );
}

/* ---------- bottom bars ---------- */

const STEP_PATHS = ["M4 3v10M12 3v10L6 8z", "M11 3v10L5 8z", "M5 3v10l6-5z", "M4 3v10l6-5zM12 3v10"];

function StudyTabs() {
  return (
    <div className="flex h-[15px] bg-[#e5e5ef] border-t border-black font-['Liberation_Sans'] text-[12px] leading-3">
      <div className="flex gap-px pl-0.5 w-[68px] bg-[#c4c7d6]">
        {STEP_PATHS.map((d) => (
          <button key={d} type="button" aria-label="Scroll tabs" className="flex w-[15px] items-center justify-center border border-[#9194a8] bg-[#a9acbf]">
            <Icon className="size-3">
              <path d={d} fill="#83869c" stroke="#83869c" />
            </Icon>
          </button>
        ))}
      </div>
      <button type="button" className="px-2.5 border-b border-x border-[#55586b] bg-[#dfe2ec] font-bold text-[#1d1d24]">
        Model
      </button>
      <button type="button" className="w-[103px] pl-[7px] text-left border-b-2 border-r border-[#55586b] bg-[#b9bfce] text-[#1d1d24]">
        Motion Study 1
      </button>
    </div>
  );
}

function BottomToolbar() {
  return (
    <div className="flex h-7 items-center bg-linear-to-b from-[#ececf8] via-[#d6d9e8] to-[#b9bfcd]">
      <div className="h-5 ml-[3px] border-l-2 border-dotted border-[#8b8fa3]" />
      <div className="relative ml-[10px] w-[97px]">
        <select
          aria-label="Layer"
          disabled
          className="appearance-none block w-full h-5 border-2 border-t-[#77777a] border-l-[#77777a] border-r-white border-b-white bg-[#d5d0c8] opacity-100"
        />
        <ComboArrow />
      </div>
      <Icon className="size-4 ml-1">
        <path d="M1 5l4-4h10v8l-4 6H1z" fill="#e4e4e8" stroke="#a3a5ad" />
        <path d="M1 5h10l4-4M11 5v10M1 8h10M1 11h10M11 8l4-3M11 11l4-3" stroke="#a3a5ad" />
      </Icon>
      <div className="self-stretch ml-2.5 w-0.5 bg-[#8f93a6] border-r border-white" />
    </div>
  );
}

function StatusBar() {
  return (
    <footer className="flex h-5 items-center border-t-2 border-[#8a8a8e] bg-[#d5d0c8] text-black">
      <span className="flex-1 pl-px">Select at least 2 profiles</span>
      <div className="flex items-center h-4 bg-[repeating-linear-gradient(90deg,#adb5c5_0_4px,#d5d0c8_4px_8px)]">
        <div className="flex gap-[3px] pl-[11px]">
          <span className="w-[5px] h-4 border-l border-[#77777a] bg-[#d5d0c8]" />
          <span className="w-[5px] h-4 border-l border-[#77777a] bg-[#d5d0c8]" />
          <span className="w-[63px] h-4 border border-t-[#77777a] border-l-[#77777a] border-r-white border-b-white bg-[#d5d0c8] leading-[14px] whitespace-nowrap">
            Editing Part
          </span>
          <span className="w-[5px] h-4 border-l border-[#77777a] bg-[#d5d0c8]" />
          <span className="w-[5px] h-4 border-l border-[#77777a] bg-[#d5d0c8]" />
        </div>
        <button type="button" aria-label="Help" className="ml-[11px] w-[13px] h-[14px] border border-[#2b5a8f] bg-white text-[12px] leading-3 font-bold text-[#089a18]">
          ?
        </button>
        <Icon className="size-4 ml-[50px] mr-[14px]">
          <path d="M2 9l7-7 5 1 1 5-7 7-3 0-3-3z" fill="#f7cd3c" stroke="#9c6208" strokeWidth="1.500" />
          <circle cx="12" cy="5" r="1.500" fill="#fff" stroke="#9c6208" />
          <path d="M6 8l4 3" stroke="#fff2a8" />
        </Icon>
      </div>
    </footer>
  );
}

export default function App() {
  const [activeTab, setActiveTab] = useState("Surfaces");
  return (
    <div className="flex flex-col min-h-screen pt-px bg-[#d9dce8] border border-r-2 border-[#3d3d4e] font-['DejaVu_Sans_Condensed','Noto_Sans',sans-serif] text-[11px] leading-[13px]">
      <div className="flex flex-1 flex-col pl-[3px] pr-0.5 pb-[3px]">
        <TitleBar />
        <Ribbon />
        <CommandTabs active={activeTab} onSelect={setActiveTab} />
        <div className="flex flex-1">
          <PropertyManager />
          <GraphicsArea />
        </div>
        <StudyTabs />
        <BottomToolbar />
        <StatusBar />
      </div>
    </div>
  );
}
